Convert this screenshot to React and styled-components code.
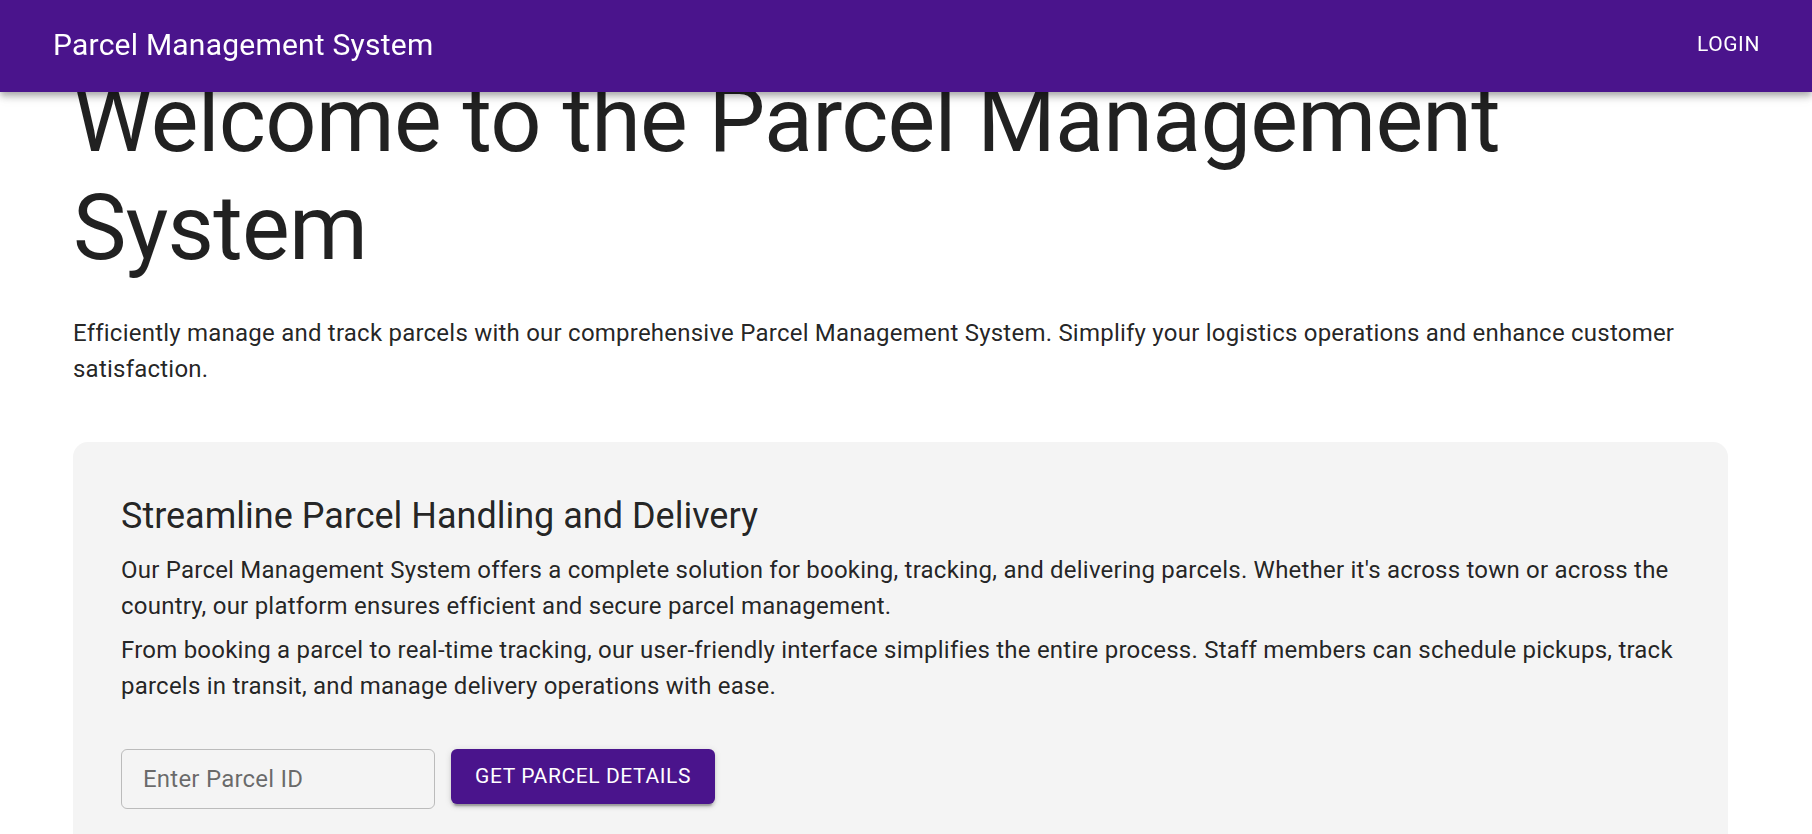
import React from 'react';
import styled, { createGlobalStyle } from 'styled-components';

const GlobalStyle = createGlobalStyle`
  html { scrollbar-width: none; }
  html::-webkit-scrollbar { display: none; }
  * { box-sizing: border-box; }
  body {
    margin: 0;
    background: #ffffff;
    color: rgba(0, 0, 0, 0.87);
    font-family: Roboto, "Helvetica", "Arial", sans-serif;
    font-weight: 400;
    -webkit-font-smoothing: antialiased;
  }
`;

const AppBar = styled.header`
  position: fixed;
  top: 0;
  left: 0;
  right: 0;
  z-index: 1100;
  background: #4a148c;
  color: #ffffff;
  box-shadow: 0px 3px 6px -1px rgba(0, 0, 0, 0.2), 0px 6px 7px 0px rgba(0, 0, 0, 0.14),
    0px 1px 15px 0px rgba(0, 0, 0, 0.12);
`;

const Toolbar = styled.div`
  display: flex;
  align-items: center;
  justify-content: space-between;
  min-height: 92px;
  padding: 0 40px 3px 53px;
`;

const Brand = styled.div`
  font-size: 30px;
  font-weight: 400;
  line-height: 1.6;
  letter-spacing: 0.0075em;
`;

const NavButton = styled.button`
  background: transparent;
  border: 0;
  color: #ffffff;
  font-family: inherit;
  font-size: 21px;
  font-weight: 400;
  line-height: 1.75;
  letter-spacing: 0.02857em;
  text-transform: uppercase;
  padding: 9px 12px;
  border-radius: 6px;
  cursor: pointer;
`;

const Main = styled.main`
  padding: 67px 0 0 73px;
`;

const Content = styled.div`
  width: 1655px;
`;

const Headline = styled.h1`
  margin: 0 0 32px;
  font-size: 90px;
  font-weight: 400;
  line-height: 1.2;
  letter-spacing: -0.00833em;
`;

const Lead = styled.p`
  margin: 0 0 55px;
  font-size: 24px;
  font-weight: 400;
  line-height: 1.5;
  letter-spacing: 0.00938em;
`;

const Card = styled.section`
  background: #f4f4f4;
  border-radius: 15px;
  padding: 50px 48px 48px;
`;

const CardTitle = styled.h2`
  margin: 0 0 12px;
  font-size: 36px;
  font-weight: 400;
  line-height: 1.334;
  letter-spacing: 0;
`;

const CardText = styled.p`
  margin: 0 0 8px;
  font-size: 24px;
  font-weight: 400;
  line-height: 1.5;
  letter-spacing: 0.00938em;
`;

const FormRow = styled.form`
  display: flex;
  align-items: flex-start;
  gap: 16px;
  margin-top: 45px;
`;

const Input = styled.input`
  width: 314px;
  height: 60px;
  padding: 0 21px;
  border: 1px solid rgba(0, 0, 0, 0.23);
  border-radius: 6px;
  background: transparent;
  font-family: inherit;
  font-size: 24px;
  letter-spacing: 0.00938em;
  color: rgba(0, 0, 0, 0.87);
  outline: none;

  &::placeholder {
    color: rgba(0, 0, 0, 0.58);
  }
`;

const PrimaryButton = styled.button`
  background: #4a148c;
  color: #ffffff;
  border: 0;
  border-radius: 6px;
  padding: 9px 24px;
  font-family: inherit;
  font-size: 21px;
  font-weight: 400;
  line-height: 1.75;
  letter-spacing: 0.02857em;
  text-transform: uppercase;
  cursor: pointer;
  box-shadow: 0px 4.5px 1.5px -3px rgba(0, 0, 0, 0.2), 0px 3px 3px 0px rgba(0, 0, 0, 0.14),
    0px 1.5px 7.5px 0px rgba(0, 0, 0, 0.12);
`;

export default function App() {
  return (
    <>
      <GlobalStyle />
      <AppBar>
        <Toolbar>
          <Brand>Parcel Management System</Brand>
          <NavButton type="button">Login</NavButton>
        </Toolbar>
      </AppBar>
      <Main>
        <Content>
          <Headline>Welcome to the Parcel Management System</Headline>
          <Lead>
            Efficiently manage and track parcels with our comprehensive Parcel Management System.
            Simplify your logistics operations and enhance customer satisfaction.
          </Lead>
          <Card>
            <CardTitle>Streamline Parcel Handling and Delivery</CardTitle>
            <CardText>
              Our Parcel Management System offers a complete solution for booking, tracking, and
              delivering parcels. Whether it's across town or across the country, our platform
              ensures efficient and secure parcel management.
            </CardText>
            <CardText>
              From booking a parcel to real-time tracking, our user-friendly interface simplifies
              the entire process. Staff members can schedule pickups, track parcels in transit, and
              manage delivery operations with ease.
            </CardText>
            <FormRow onSubmit={(e) => e.preventDefault()}>
              <Input placeholder="Enter Parcel ID" />
              <PrimaryButton type="submit">Get Parcel Details</PrimaryButton>
            </FormRow>
          </Card>
        </Content>
      </Main>
    </>
  );
}
